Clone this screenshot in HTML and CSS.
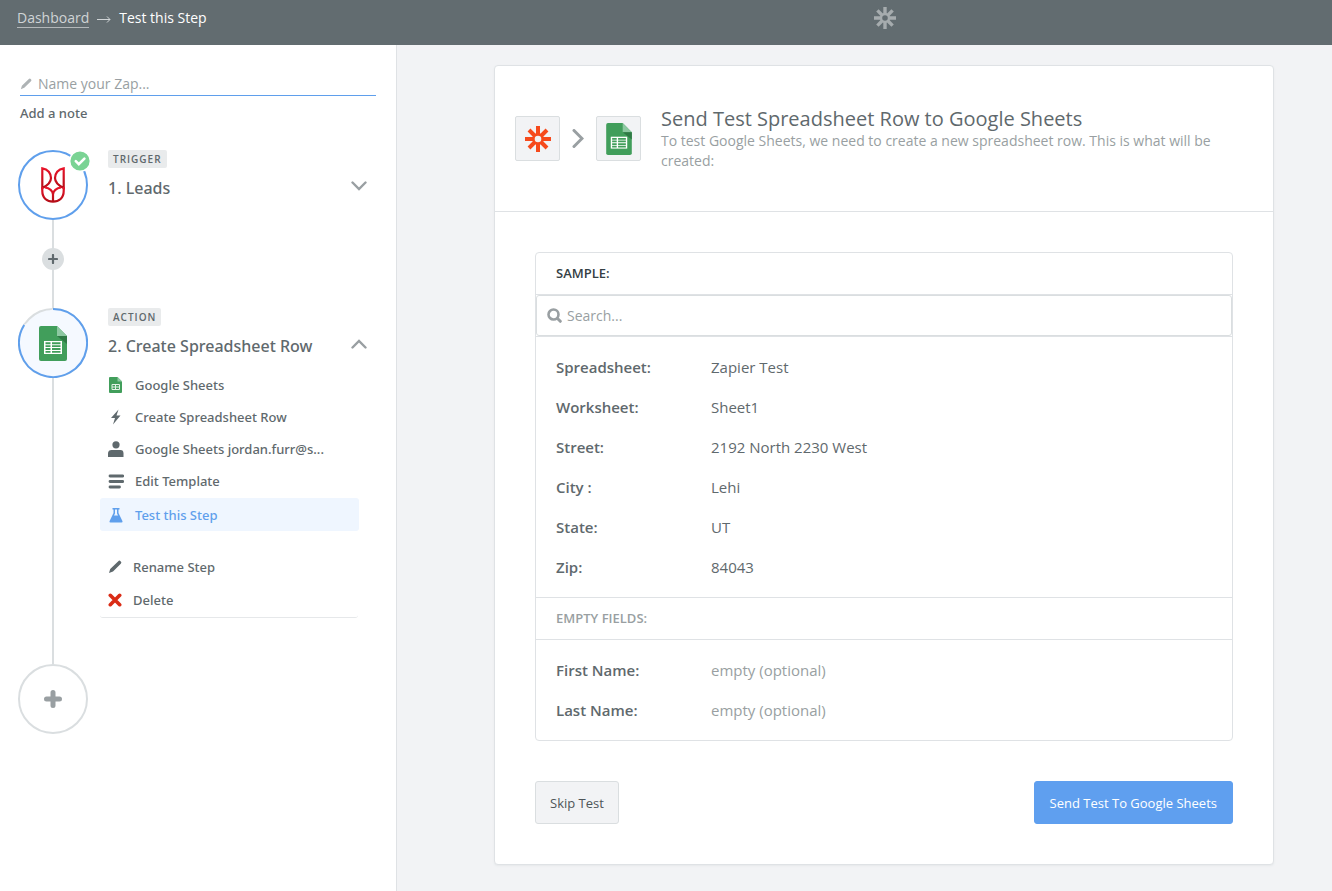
FILE: index.html
```
<!DOCTYPE html>
<html lang="en">
<head>
<meta charset="utf-8">
<title>Test this Step</title>
<link rel="stylesheet" href="styles.css">
</head>
<body>
<svg class="sprite" aria-hidden="true">
  <defs>
    <linearGradient id="red" x1="0" y1="0" x2="0" y2="1"><stop offset="0" stop-color="#e8142a"/><stop offset="1" stop-color="#b50d17"/></linearGradient>
    <symbol id="zap" viewBox="0 0 26 26">
      <g stroke="currentColor" stroke-width="4" fill="none">
        <path d="M13 0v9M13 17v9M0 13h9M17 13h9M4 4l6 6M16 16l6 6M22 4l-6 6M10 16l-6 6"/>
        <circle cx="13" cy="13" r="4.600" stroke-width="2.600"/>
      </g>
    </symbol>
    <symbol id="sheets" viewBox="0 0 28 35">
      <path fill="#419e5b" d="M2 0h16l10 10v23a2 2 0 0 1-2 2H2a2 2 0 0 1-2-2V2a2 2 0 0 1 2-2z"/>
      <path fill="#8dc8a1" d="M18 0l10 10H18z"/>
      <path fill="#2f7a45" d="M18 10h10v8z"/>
      <path fill="#fff" d="M5 15h18v13H5z"/>
      <path fill="#419e5b" d="M6.500 16.300h5v1.900h-5zM13 16.300h8.500v1.900H13zM6.500 19.200h5v1.900h-5zM13 19.200h8.500v1.900H13zM6.500 22.100h5V24h-5zM13 22.100h8.500V24H13zM6.500 25h5v1.800h-5zM13 25h8.500v1.800H13z"/>
    </symbol>
    <symbol id="pencil" viewBox="0 0 14 14">
      <path fill="currentColor" d="M10.300 1.200a1.500 1.500 0 0 1 2.200 0l.3.300a1.500 1.500 0 0 1 0 2.200L5 11.500 1 13l1.200-4z"/>
    </symbol>
    <symbol id="chevron" viewBox="0 0 16 10">
      <path d="M1.500 1.500L8 8l6.500-6.500" fill="none" stroke="currentColor" stroke-width="2.400" stroke-linecap="round"/>
    </symbol>
  </defs>
</svg>

<header class="topbar">
  <nav class="crumbs" aria-label="Breadcrumb">
    <a class="crumb-link" href="#">Dashboard</a>
    <svg class="crumb-arrow" width="14" height="8" viewBox="0 0 14 8" fill="none" stroke="currentColor"><path d="M0 4.500h13M10 1.500l3 3-3 3"/></svg>
    <span>Test this Step</span>
  </nav>
  <div class="brand"><svg width="22" height="22"><use href="#zap"/></svg></div>
</header>

<div class="layout">
  <aside class="sidebar">
    <div class="name-field">
      <svg width="12" height="12"><use href="#pencil"/></svg>
      <input class="name-input" type="text" placeholder="Name your Zap..." aria-label="Name your Zap">
    </div>
    <button class="note" type="button">Add a note</button>

    <section class="step">
      <div class="rail">
        <div class="node node-done">
          <svg width="24" height="36" viewBox="0 0 24 36" fill="none" stroke="url(#red)" stroke-width="2.200">
            <path d="M1.300 1.300C7 2 10 6.500 10 11c0 4-3.500 7.500-8.700 10zM22.700 1.300C17 2 14 6.500 14 11c0 4 3.500 7.500 8.700 10z"/>
            <path d="M1.300 20v4C1.300 31 6 34.700 12 34.700S22.700 31 22.700 24v-4"/>
            <path d="M4 20.500c4.500.5 8 3.500 8 7 0-3.500 3.500-6.500 8-7M12 27v7"/>
          </svg>
          <svg class="badge" width="22" height="22" viewBox="0 0 22 22"><circle cx="11" cy="11" r="10.300" fill="#7ad394" stroke="#fff" stroke-width="1.400"/><path d="M6.800 11.200l3 3 5.600-5.600" fill="none" stroke="#fff" stroke-width="2.600" stroke-linecap="round"/></svg>
        </div>
        <div class="line line-short">
          <button class="insert" type="button" aria-label="Insert step"><svg width="10" height="10" viewBox="0 0 10 10"><path d="M5 1v8M1 5h8" stroke="currentColor" stroke-width="2.200" stroke-linecap="round"/></svg></button>
        </div>
      </div>
      <div class="step-body">
        <div class="step-head">
          <div><span class="tag">TRIGGER</span><h2 class="step-title">1. Leads</h2></div>
          <button class="toggle" type="button" aria-label="Expand step"><svg width="18" height="10"><use href="#chevron"/></svg></button>
        </div>
      </div>
    </section>

    <section class="step">
      <div class="rail">
        <div class="node">
          <svg class="ring" width="70" height="70" viewBox="0 0 70 70" fill="#f5f9ff" stroke-width="2"><circle cx="35" cy="35" r="34" stroke="#dadee0"/><path d="M35 1A34 34 0 1 1 6.200 17" stroke="#5f9fec"/></svg>
          <svg class="node-icon" width="28" height="35"><use href="#sheets"/></svg>
        </div>
        <div class="line"></div>
      </div>
      <div class="step-body">
        <div class="step-head">
          <div><span class="tag">ACTION</span><h2 class="step-title">2. Create Spreadsheet Row</h2></div>
          <button class="toggle toggle-open" type="button" aria-label="Collapse step"><svg width="18" height="10"><use href="#chevron"/></svg></button>
        </div>
        <ul class="menu">
          <li><a class="item" href="#"><svg width="16" height="16" viewBox="0 0 16 16"><path fill="#419e5b" d="M2 0h7.500L14 4.500V15a1 1 0 0 1-1 1H2a1 1 0 0 1-1-1V1a1 1 0 0 1 1-1z"/><path fill="#8dc8a1" d="M9.500 0L14 4.500H9.500z"/><path fill="none" stroke="#e3f2e7" d="M4 7.500h7.500v5H4zM7.500 7.500v5M4 10h7.500"/></svg>Google Sheets</a></li>
          <li><a class="item" href="#"><svg width="16" height="16" viewBox="0 0 16 16"><path fill="currentColor" d="M10.500.5L3 9h4l-2 6.500L12.500 6.500h-4z"/></svg>Create Spreadsheet Row</a></li>
          <li><a class="item" href="#"><svg width="16" height="16" viewBox="0 0 16 16" fill="currentColor"><circle cx="8" cy="3.800" r="3.600"/><path d="M0 16v-3.500C0 10 1.500 9 3.500 9h9c2 0 3 1 3 3.500V16z"/></svg>Google Sheets jordan.furr@s...</a></li>
          <li><a class="item" href="#"><svg width="16" height="16" viewBox="0 0 16 16" fill="none" stroke="currentColor" stroke-width="2.800" stroke-linecap="round"><path d="M2 3h12.700M2 8.500h12.700M2 14h9.500"/></svg>Edit Template</a></li>
          <li><a class="item item-active" href="#" aria-current="step"><svg width="16" height="16" viewBox="0 0 16 16"><path fill="currentColor" d="M4.500 1h7v1.500h-1V6l4 8.300q.3 1.200-1 1.200h-11q-1.300 0-1-1.200L5.500 6V2.500h-1z"/><path fill="#eff6ff" d="M7 2.500h2v4l1 2H6l1-2z"/></svg>Test this Step</a></li>
        </ul>
        <div class="actions">
          <button class="action" type="button"><svg width="14" height="14"><use href="#pencil"/></svg>Rename Step</button>
          <button class="action" type="button"><svg width="14" height="14" viewBox="0 0 14 14"><path d="M2.300 2.300l9.400 9.400M11.700 2.300l-9.400 9.400" stroke="#da2c16" stroke-width="3.600" stroke-linecap="round"/></svg>Delete</button>
        </div>
      </div>
    </section>

    <button class="node add-step" type="button" aria-label="Add step"><svg width="18" height="18" viewBox="0 0 18 18"><path d="M9 2.500v13M2.500 9h13" stroke="#999fa2" stroke-width="5" stroke-linecap="round"/></svg></button>
  </aside>

  <main class="main">
    <article class="card">
      <header class="card-head">
        <span class="app"><svg class="zap-orange" width="26" height="26"><use href="#zap"/></svg></span>
        <svg class="next" width="12" height="20" viewBox="0 0 12 20"><path d="M2 1.500l8 8-8 8" fill="none" stroke="#999fa2" stroke-width="3" stroke-linecap="round"/></svg>
        <span class="app"><svg width="26" height="32"><use href="#sheets"/></svg></span>
        <div class="intro">
          <h1 class="title">Send Test Spreadsheet Row to Google Sheets</h1>
          <p class="lead">To test Google Sheets, we need to create a new spreadsheet row. This is what will be created:</p>
        </div>
      </header>
      <div class="card-body">
        <div class="sample">
          <h3 class="group-title">SAMPLE:</h3>
          <div class="search">
            <svg width="15" height="15" viewBox="0 0 15 15" fill="none" stroke="#999fa2" stroke-linecap="round"><circle cx="6.500" cy="6.500" r="5" stroke-width="2.600"/><path d="M10.500 10.500l2.800 2.800" stroke-width="3"/></svg>
            <input class="search-input" type="search" placeholder="Search..." aria-label="Search">
          </div>
          <dl class="fields">
            <dt>Spreadsheet:</dt><dd>Zapier Test</dd>
            <dt>Worksheet:</dt><dd>Sheet1</dd>
            <dt>Street:</dt><dd>2192 North 2230 West</dd>
            <dt>City :</dt><dd>Lehi</dd>
            <dt>State:</dt><dd>UT</dd>
            <dt>Zip:</dt><dd>84043</dd>
          </dl>
          <h3 class="group-title group-empty">EMPTY FIELDS:</h3>
          <dl class="fields fields-empty">
            <dt>First Name:</dt><dd>empty (optional)</dd>
            <dt>Last Name:</dt><dd>empty (optional)</dd>
          </dl>
        </div>
        <div class="buttons">
          <button class="btn" type="button">Skip Test</button>
          <button class="btn btn-primary" type="button">Send Test To Google Sheets</button>
        </div>
      </div>
    </article>
  </main>
</div>
</body>
</html>
```
FILE: styles.css
```
* { box-sizing: border-box; }
body {
  margin: 0;
  min-height: 100vh;
  display: flex;
  flex-direction: column;
  background: #f2f3f5;
  color: #5f696d;
  font: 400 13px/20px "Open Sans", sans-serif;
}
h1, h2, h3, p, ul, dl, dd { margin: 0; padding: 0; font-weight: 400; }
ul { list-style: none; }
a { color: inherit; text-decoration: none; }
svg { display: block; flex: none; }
button, input { font: inherit; color: inherit; margin: 0; padding: 0; border: 0; background: none; }
button { cursor: pointer; }
input::placeholder { color: #999fa2; opacity: 1; }
.sprite { position: absolute; width: 0; height: 0; }

.topbar { display: flex; height: 45px; background: #626c70; color: #fff; font-size: 14px; }
.crumbs { display: flex; align-items: flex-start; gap: 8px; width: 437px; padding: 8px 17px; }
.crumb-link { color: #d0d4d6; border-bottom: 1px solid #b3b8ba; line-height: 19px; }
.crumb-arrow { margin: 7px 0; color: #d0d4d6; }
.brand { flex: 1; display: flex; justify-content: center; padding-top: 7px; color: #a6acae; }

.layout { flex: 1; display: flex; }
.sidebar { flex: none; width: 397px; padding: 27px 20px 40px 18px; background: #fff; border-right: 1px solid #dfe2e5; }
.name-field { display: flex; align-items: center; gap: 6px; height: 24px; margin-left: 2px; border-bottom: 1px solid #5f9fec; color: #aeb3b5; }
.name-input { flex: 1; min-width: 0; font-size: 14px; color: #5f696d; outline: 0; }
.note { display: block; margin: 7px 2px 27px; font-family: "Noto Sans", "Open Sans", sans-serif; font-weight: 500; }

.step { display: flex; gap: 12px; }
.rail { flex: none; display: flex; flex-direction: column; align-items: center; width: 70px; }
.node { flex: none; position: relative; display: flex; align-items: center; justify-content: center; width: 70px; height: 70px; border-radius: 50%; background: #fff; }
.node-done { border: 2px solid #5f9fec; }
.badge { position: absolute; top: -2px; right: -5px; }
.ring { position: absolute; inset: 0; }
.node-icon { position: relative; }
.line { flex: 1; display: flex; align-items: center; justify-content: center; width: 2px; background: #dadee0; }
.line-short { min-height: 88px; padding-bottom: 11px; }
.insert { flex: none; display: flex; align-items: center; justify-content: center; width: 22px; height: 22px; border-radius: 50%; background: #dadee0; }
.add-step { border: 2px solid #dadee0; }

.step-body { flex: 1; min-width: 0; padding-bottom: 46px; }
.step-head { display: flex; align-items: center; justify-content: space-between; padding: 0 8px; }
.tag { display: block; width: fit-content; padding: 0 5px; border-radius: 2px; background: #e9ebec; font-size: 10px; font-weight: 600; line-height: 18px; letter-spacing: 1px; }
.step-title { margin-top: 8px; font-family: "Noto Sans", "Open Sans", sans-serif; font-size: 16px; font-weight: 500; line-height: 24px; }
.toggle { padding-top: 21px; color: #999fa2; }
.toggle-open svg { transform: rotate(180deg); }
.menu { margin: 11px 17px 19px 0; }
.item { display: flex; align-items: center; gap: 11px; height: 32px; padding: 0 8px; border-radius: 3px; font-family: "Noto Sans", "Open Sans", sans-serif; font-weight: 500; }
.item-active { height: 33px; margin-top: 1px; background: #eff6ff; color: #5f9fec; }
.actions { display: flex; flex-direction: column; margin-right: 18px; padding-bottom: 1px; border-bottom: 1px solid #e6e8ea; border-radius: 3px; }
.action { display: flex; align-items: center; gap: 11px; height: 33px; padding: 0 8px; font-family: "Noto Sans", "Open Sans", sans-serif; font-weight: 500; }

.main { flex: 1; display: flex; justify-content: center; align-items: flex-start; padding: 20px 0 26px 39px; }
.card { flex: 0 1 780px; background: #fff; border: 1px solid #dfe2e5; border-radius: 4px; box-shadow: 0 1px 2px #e6e8ea; }
.card-head { display: flex; align-items: center; padding: 40px 20px; border-bottom: 1px solid #dfe2e5; min-height: 146px; }
.app { flex: none; display: flex; align-items: center; justify-content: center; width: 45px; height: 45px; border: 1px solid #dadee0; border-radius: 2px; background: #f2f3f5; }
.zap-orange { color: #f64a1c; }
.next { margin: 0 12px; }
.intro { margin-left: 20px; }
.title { font-size: 20px; line-height: 24px; }
.lead { color: #999fa2; font-size: 14px; line-height: 20px; }
.card-body { padding: 40px; }
.sample { border: 1px solid #dfe2e5; border-radius: 4px; font-size: 15px; }
.group-title { padding: 0 20px; border-bottom: 1px solid #dfe2e5; color: #354044; font-size: 13px; font-weight: 600; line-height: 41px; }
.search { display: flex; align-items: center; gap: 5px; height: 41px; padding: 0 10px; border: 1px solid #dadee0; border-radius: 3px; }
.search-input { flex: 1; min-width: 0; font-size: 14px; appearance: none; outline: 0; }
.fields { display: grid; grid-template-columns: 155px 1fr; padding: 10px 20px; border-top: 1px solid #dfe2e5; line-height: 40px; }
.fields dt { font-weight: 600; }
.group-empty { border-top: 1px solid #dfe2e5; border-bottom: 0; color: #999fa2; }
.fields-empty dd { color: #999fa2; }
.buttons { display: flex; justify-content: space-between; margin-top: 40px; }
.btn { height: 43px; padding: 0 14px; border: 1px solid #dadee0; border-radius: 3px; background: #f2f3f5; color: #4e5558; }
.btn-primary { padding: 0 15px; border-color: #5f9fef; background: #5f9fef; color: #fff; }
```
